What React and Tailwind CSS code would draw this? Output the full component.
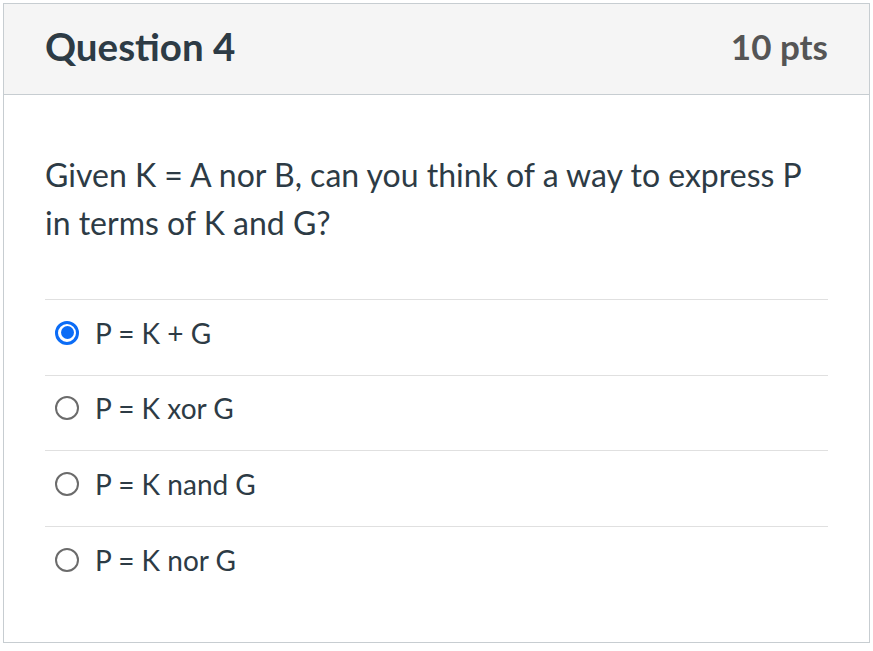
import { useState } from "react";

const options = [
  { id: "a", label: "P = K + G" },
  { id: "b", label: "P = K xor G" },
  { id: "c", label: "P = K nand G" },
  { id: "d", label: "P = K nor G" },
];

export default function App() {
  const [picked, setPicked] = useState("a");

  return (
    <div className="min-h-screen bg-white p-[3px]" style={{ fontFamily: "Lato, 'Liberation Sans', sans-serif" }}>
      <div className="w-[867px] h-[640px] border border-[#c7cdd1] bg-white flex flex-col">
        {/* header */}
        <div className="h-[91px] shrink-0 bg-[#f5f5f5] border-b border-[#c7cdd1] flex items-center justify-between px-[41px] pb-[5px]">
          <h2 className="text-[38.5px] font-bold text-[#2d3b45] leading-none">Question 4</h2>
          <span className="text-[35px] font-bold text-[#555555] leading-none">10 pts</span>
        </div>

        <div className="px-[41px] pt-[56px]">
          <p className="text-[32px] leading-[48px] text-[#2d3b45]">
            Given K = A nor B, can you think of a way to express P in terms of K and G?
          </p>

          <div className="mt-[52px] border-t border-[#e0e0e0]">
            {options.map((opt) => {
              const on = picked === opt.id;
              return (
                <button
                  key={opt.id}
                  onClick={() => setPicked(opt.id)}
                  className="w-full h-[75.6px] flex items-center gap-[16px] border-b border-[#e0e0e0] text-left pb-[9px] last:border-b-0"
                >
                  <span
                    className={`ml-[10px] w-[24px] h-[24px] rounded-full flex items-center justify-center ${
                      on ? "border-[3px] border-[#0b6cf6]" : "border-2 border-[#6b6b6b]"
                    }`}
                  >
                    {on && <span className="w-[13px] h-[13px] rounded-full bg-[#0b6cf6]" />}
                  </span>
                  <span className="text-[28px] text-[#2d3b45]">{opt.label}</span>
                </button>
              );
            })}
          </div>
        </div>
      </div>
    </div>
  );
}
